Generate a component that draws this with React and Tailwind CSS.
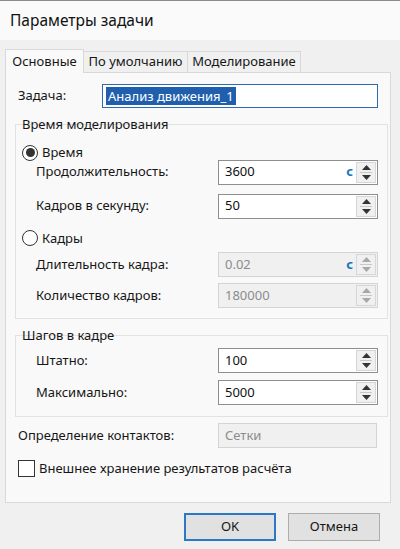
import React from "react";

const Up = ({ color }) => (
  <svg width="9" height="5" viewBox="0 0 9 5">
    <path d="M0 5 L4.5 0 L9 5 Z" fill={color} />
  </svg>
);

const Down = ({ color }) => (
  <svg width="9" height="5" viewBox="0 0 9 5">
    <path d="M0 0 L4.5 5 L9 0 Z" fill={color} />
  </svg>
);

// поле со стрелками как в Windows
const SpinInput = ({ value, unit, disabled }) => {
  const arrow = disabled ? "#a8a8a8" : "#333333";
  return (
    <div
      className={`flex h-[25px] w-[160px] border ${
        disabled ? "border-[#d4d4d4] bg-[#f0f0f0]" : "border-[#8e8e8e] bg-white"
      }`}
    >
      <div
        className={`flex flex-1 items-center pl-[6px] ${
          disabled ? "text-[#8c8c8c]" : "text-[#111]"
        }`}
      >
        {value}
      </div>
      {unit && (
        <div className="flex items-center pr-[2px] font-bold text-[#1677c0]">с</div>
      )}
      <div className="m-[1px] flex w-[20px] flex-col items-center justify-center gap-[2px] border border-[#d6d6d6] bg-[#f0f0f0]">
        <Up color={arrow} />
        <div className="h-px w-[12px] bg-[#c8c8c8]" />
        <Down color={arrow} />
      </div>
    </div>
  );
};

const Row = ({ label, children, className = "" }) => (
  <div className={`flex items-center justify-between ${className}`}>
    <span className="pl-[20px]">{label}</span>
    {children}
  </div>
);

const Radio = ({ checked, label, className = "" }) => (
  <div className={`flex items-center gap-[4px] pl-[6px] ${className}`}>
    <div className="flex h-[16px] w-[16px] items-center justify-center rounded-full border-[1.5px] border-[#333] bg-white">
      {checked && <div className="h-[9px] w-[9px] rounded-full bg-[#333]" />}
    </div>
    <span>{label}</span>
  </div>
);

const App = () => {
  return (
    <div className="h-[549px] w-[400px] overflow-hidden bg-[#f0f0f0] font-['Segoe_UI','Noto_Sans',sans-serif] text-[13px] text-[#161616]">
      <div className="h-[40px] border-t border-[#8a8a8a] bg-[#fafafa] pl-[10px] pt-[8px] text-[15.5px] text-[#111]">
        Параметры задачи
      </div>

      <div className="mt-[9px] flex items-end pl-[5px]">
        <div className="relative z-10 -mb-px flex h-[24px] w-[79px] items-center justify-center border border-b-0 border-[#d9d9d9] bg-[#f9f9f9]">
          Основные
        </div>
        <div className="flex h-[21px] w-[104px] items-center justify-center border border-b-0 border-l-0 border-[#d9d9d9] bg-[#f0f0f0]">
          По умолчанию
        </div>
        <div className="flex h-[21px] w-[113px] items-center justify-center border border-b-0 border-l-0 border-[#d9d9d9] bg-[#f0f0f0]">
          Моделирование
        </div>
      </div>

      <div className="ml-[5px] h-[431px] w-[386px] border border-[#d9d9d9] bg-[#f9f9f9] pl-[9px] pr-[10px] pt-[11px]">
        <div className="flex items-center">
          <span className="w-[87px] pl-[3px]">Задача:</span>
          <div className="flex h-[24px] w-[276px] items-center border border-[#2b6cb0] bg-white pl-[3px]">
            <span className="bg-[#1f5fae] px-[2px] leading-[18px] text-white">
              Анализ движения_1
            </span>
          </div>
        </div>

        <div className="mt-[16px] h-[195px] w-[373px] border border-[#e2e2e2] pr-[9px]">
          <div className="-mt-[10px] pl-[6px] leading-[18px]">Время моделирования</div>
          <Radio checked label="Время" className="mt-[10px]" />
          <Row label="Продолжительность:" className="-mt-[3px]">
            <SpinInput value="3600" unit />
          </Row>
          <Row label="Кадров в секунду:" className="mt-[9px]">
            <SpinInput value="50" />
          </Row>
          <Radio label="Кадры" className="mt-[10px]" />
          <Row label="Длительность кадра:" className="mt-[4px]">
            <SpinInput value="0.02" unit disabled />
          </Row>
          <Row label="Количество кадров:" className="mt-[6px]">
            <SpinInput value="180000" disabled />
          </Row>
        </div>

        <div className="mt-[16px] h-[82px] w-[373px] border border-[#e2e2e2] pr-[9px]">
          <div className="-mt-[10px] pl-[6px] leading-[18px]">Шагов в кадре</div>
          <Row label="Штатно:" className="mt-[4px]">
            <SpinInput value="100" />
          </Row>
          <Row label="Максимально:" className="mt-[7px]">
            <SpinInput value="5000" />
          </Row>
        </div>

        <div className="mt-[6px] flex w-[373px] items-center justify-between pr-[11px]">
          <span className="pl-[3px]">Определение контактов:</span>
          <div className="flex h-[25px] w-[159px] items-center border border-[#d4d4d4] bg-[#f0f0f0] pl-[6px] text-[#8c8c8c]">
            Сетки
          </div>
        </div>

        <div className="mt-[11px] flex items-center gap-[4px] pl-[3px]">
          <div className="h-[17px] w-[17px] border-[1.5px] border-[#333] bg-white" />
          <span>Внешнее хранение результатов расчёта</span>
        </div>
      </div>

      <div className="mt-[10px] flex justify-end gap-[12px] pr-[20px]">
        <button className="h-[28px] w-[92px] border-2 border-[#2a78c6] bg-[#e1e1e1] text-[13px]">
          OK
        </button>
        <button className="h-[28px] w-[92px] border border-[#adadad] bg-[#e1e1e1] text-[13px]">
          Отмена
        </button>
      </div>
    </div>
  );
};

export default App;
